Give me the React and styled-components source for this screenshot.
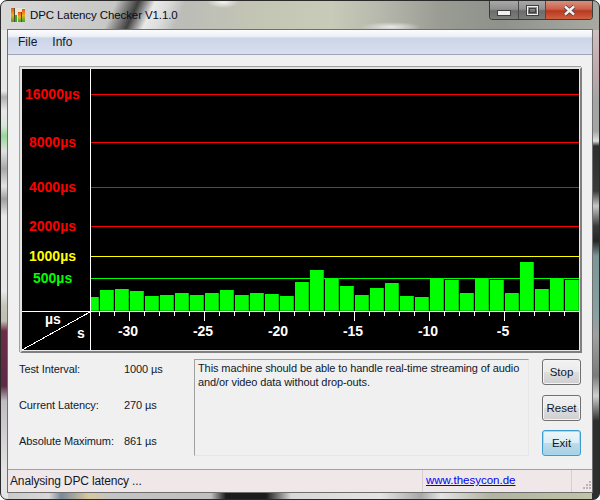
import React from "react";
import styled, { createGlobalStyle } from "styled-components";

const Global = createGlobalStyle`
  html, body { margin: 0; padding: 0; background: #fff; }
  * { box-sizing: border-box; }
`;

const uiFont = `"Liberation Sans", Arial, sans-serif`;

const Frame = styled.div`
  width: 600px;
  height: 500px;
  padding: 0 6px 6px 6px;
  border: 1px solid #2a2a2a;
  border-radius: 7px;
  display: flex;
  flex-direction: column;
  overflow: hidden;
  font-family: ${uiFont};
  color: #000;
  background-color: #c4c4c0;
  background-repeat: no-repeat;
  background-image:
    radial-gradient(ellipse 16px 6px at 222px 1px, #f4f4ec 0%, rgba(244,244,236,0) 100%),
    radial-gradient(ellipse 30px 5px at 390px 26px, #eaeaea 0%, rgba(234,234,234,0) 100%),
    linear-gradient(115deg, rgba(60,60,60,0) 0px, rgba(60,60,60,0) 105px, rgba(40,40,40,.85) 125px, rgba(235,235,235,.95) 140px, rgba(235,235,235,.7) 152px, rgba(60,60,60,0) 168px),
    linear-gradient(90deg, #d8d8d8 0px, #cfcfcf 60px, #bcbcb8 180px, #c4c6b4 260px, #c8cbb8 330px, #b6b8ac 380px, #9a9c94 440px, #8e928a 500px, #a8aaa2 598px),
    linear-gradient(180deg, #e8e8e8 0px, #e8e8e8 90px, #b0b0b0 96px, #e8e8e8 110px, #d8e4d8 125px, #96d896 135px, #e0e0e0 150px, #a8a8a8 168px, #e4e4e4 185px, #a0a0a0 198px, #e8e8e8 215px, #e8e8e8 290px, #c4c4b8 305px, #c0c0b0 320px, #6c2c48 330px, #5e2a44 385px, #c0bcc0 400px, #e4e4e4 470px),
    linear-gradient(180deg, #d8d0d0 0px, #c0a8ac 70px, #a4a4a4 100px, #a4a4a4 130px, #e0e0e0 140px, #2e2e2e 145px, #3a3a3a 190px, #c8c8c8 205px, #3a3a3a 225px, #262626 240px, #7c9698 255px, #86a0a2 310px, #a0a0a0 335px, #7a7a7a 375px, #d0d0d0 395px, #2e2e2e 420px, #2e2e2e 470px),
    linear-gradient(90deg, #c8c8c8 0px, #d8d8d8 48px, #7a8a98 60px, #d8c8a0 88px, #c4c4c4 110px, #c0c0c0 210px, #1c1c1c 225px, #1c1c1c 265px, #d8d8d8 290px, #e4e4e4 380px, #a8a8a8 420px, #e4e4e4 440px, #b0b4a0 490px, #c0c4a8 590px);
  background-size:
    100% 29px, 100% 29px, 100% 29px, 100% 29px,
    7px 100%, 7px 100%, 100% 7px;
  background-position:
    0 0, 0 0, 0 0, 0 0,
    left 0 top 0, right 0 top 0, left 0 bottom 0;
`;

const TitleBar = styled.header`
  flex: 0 0 28px;
  display: flex;
  align-items: flex-start;
  margin: 0 -6px;
  padding: 6px 0 0 9px;
`;

const AppIcon = styled.svg`
  width: 16px;
  height: 16px;
  flex: none;
`;

const Title = styled.h1`
  margin: 0 0 0 4px;
  font-size: 11.5px;
  letter-spacing: -0.1px;
  font-weight: 400;
  line-height: 16px;
  color: #0a0a18;
  flex: 1;
`;

const CaptionGroup = styled.div`
  display: flex;
  margin: -6px 6px 0 0;
  height: 19px;
  border: 1px solid #3c3c3c;
  border-top: 0;
  border-radius: 0 0 4px 4px;
  overflow: hidden;
`;

const CaptionButton = styled.div`
  width: ${(p) => p.$w}px;
  height: 100%;
  display: flex;
  align-items: center;
  justify-content: center;
  background: ${(p) =>
    p.$close
      ? "linear-gradient(180deg, #d89080 0%, #cc6048 45%, #b83820 55%, #d06040 100%)"
      : "linear-gradient(180deg, #a8a8a8 0%, #909090 45%, #6c6c6c 55%, #7c7c7c 100%)"};
  border-left: ${(p) => (p.$first ? "0" : "1px solid #4a4a4a")};
`;

const CaptionGlyph = styled.svg`
  display: block;
  margin-top: ${(p) => p.$drop || 0}px;
`;

const Client = styled.main`
  flex: 1;
  min-height: 0;
  display: flex;
  flex-direction: column;
  background: #f0f0f0;
  border: 1px solid #6f6f6f;
`;

const MenuBar = styled.nav`
  flex: 0 0 25px;
  display: flex;
  align-items: center;
  gap: 15px;
  padding: 0 0 1px 10px;
  font-size: 12px;
  color: #10182c;
  background: linear-gradient(180deg, #fbfcfe 0%, #eef1f8 25%, #ccd5e8 35%, #d8dfee 100%);
  border-bottom: 1px solid #a0a6b8;
`;

const MenuItem = styled.span`
  line-height: 16px;
`;

const GraphPanel = styled.section`
  margin: 12px 10px 0 12px;
  flex: 0 0 286px;
  border: 2px solid;
  border-color: #e2e2e2 #808080 #808080 #e2e2e2;
  box-shadow: -1px -1px 0 #a0a0a0;
`;

const GraphInner = styled.div`
  height: 282px;
  border-right: 1px solid #e8e8e8;
  border-bottom: 1px solid #e8e8e8;
  background: #000;
`;

const ChartSvg = styled.svg`
  display: block;
  width: 557px;
  height: 281px;
  font-family: "Liberation Sans", Arial, sans-serif;
  font-weight: 700;
  font-size: 14px;
`;

const InfoRow = styled.section`
  flex: 1;
  min-height: 0;
  display: flex;
  align-items: flex-start;
  padding: 6px 10px 0 10px;
`;

const StatList = styled.dl`
  flex: 0 0 176px;
  margin: 0;
  padding: 3px 0 0 1px;
  display: grid;
  grid-template-columns: 105px 1fr;
  grid-auto-rows: 36px;
  align-items: start;
  font-size: 11px;
  letter-spacing: -0.1px;
  line-height: 15px;
  color: #10182c;
`;

const StatLabel = styled.dt`
  margin: 0;
`;

const StatValue = styled.dd`
  margin: 0;
`;

const MessageBox = styled.div`
  flex: 0 0 335px;
  height: 97px;
  padding: 1px 3px 0;
  font-size: 11px;
  letter-spacing: -0.1px;
  line-height: 14px;
  color: #10182c;
  border: 1px solid;
  border-color: #a0a0a0 #e6e6e6 #e6e6e6 #a0a0a0;
`;

const ButtonColumn = styled.div`
  margin-left: 13px;
  display: flex;
  flex-direction: column;
  gap: 9.5px;
`;

const Button = styled.button`
  width: 39px;
  height: 26px;
  padding: 0;
  font-family: ${uiFont};
  font-size: 11.5px;
  color: #10182c;
  border-radius: 3px;
  border: 1px solid ${(p) => (p.$focus ? "#3c9ccf" : "#707070")};
  box-shadow: inset 0 0 0 1px ${(p) => (p.$focus ? "#9edcf2" : "#f4f4f4")};
  background: ${(p) =>
    p.$focus
      ? "linear-gradient(180deg, #ecf6fb 0%, #dceef6 48%, #bcdcea 52%, #a8cfe2 100%)"
      : "linear-gradient(180deg, #f2f2f2 0%, #ebebeb 48%, #dddddd 52%, #cfcfcf 100%)"};
`;

const StatusBar = styled.footer`
  flex: 0 0 23px;
  display: flex;
  align-items: center;
  font-size: 12px;
  color: #10182c;
  background: #f0e8e8;
  border-top: 1px solid #a0a0a0;
`;

const StatusText = styled.span`
  flex: 0 0 414px;
  padding-left: 2px;
  letter-spacing: -0.15px;
`;

const StatusLink = styled.a`
  flex: 0 0 150px;
  padding-left: 3px;
  height: 100%;
  font-size: 11.5px;
  line-height: 21px;
  color: #0000ee;
  text-decoration: underline;
  border-left: 1px solid #d4d0d0;
  border-right: 1px solid #d4d0d0;
`;

const Grip = styled.svg`
  margin-left: auto;
  align-self: flex-end;
`;

const bars = [
  297, 290, 289, 291, 296, 295, 293, 295, 293, 290, 295, 293, 294, 296, 282, 270,
  278, 286, 295, 288, 283, 296, 297, 278, 280, 293, 278, 280, 293, 262, 289, 278, 280,
];

const levels = [
  { y: 94, line: "#ff0000", label: "16000µs", x: 25 },
  { y: 142, line: "#ff0000", label: "8000µs", x: 29 },
  { y: 187, line: "#ff0000", label: "4000µs", x: 29 },
  { y: 226, line: "#ff0000", label: "2000µs", x: 29 },
  { y: 256, line: "#ffff00", label: "1000µs", x: 29 },
  { y: 278, line: "#00ff00", label: "500µs", x: 33 },
];

const axisLabels = [
  { v: "-30", x: 129 },
  { v: "-25", x: 204 },
  { v: "-20", x: 279 },
  { v: "-15", x: 354 },
  { v: "-10", x: 429 },
  { v: "-5", x: 504 },
];

function Chart() {
  const ticks = [];
  for (let i = 0; i < 32; i++) ticks.push(99 + 15 * i);
  return (
    <ChartSvg viewBox="22 69 557 281" shapeRendering="crispEdges">
      {levels.map((l) => (
        <rect key={l.y} x="91" y={l.y} width="489" height="1" fill={l.line} />
      ))}
      {bars.map((top, i) => {
        const x = i === 0 ? 91 : 100 + 15 * (i - 1);
        const w = i === 0 ? 8 : 14;
        return (
          <g key={i}>
            <rect x={x} y={top} width={w} height={311 - top} fill="#00c800" />
            <rect x={x} y={top} width={w - 1} height={310 - top} fill="#00ff00" />
          </g>
        );
      })}
      <rect x="22" y="311" width="558" height="1" fill="#fff" />
      <rect x="90" y="69" width="1" height="282" fill="#fff" />
      {ticks.map((x) => {
        const long = (x - 129) % 75 === 0;
        return <rect key={x} x={x} y="312" width="1" height={long ? 9 : 4} fill="#fff" />;
      })}
      <line x1="22" y1="350" x2="90" y2="312" stroke="#fff" strokeWidth="1" />
      {levels.map((l) => (
        <text key={l.label} x={l.x} y={l.y + 5} fill={l.line}>
          {l.label}
        </text>
      ))}
      <text x="45" y="324" fill="#fff">µs</text>
      <text x="77" y="338" fill="#fff">s</text>
      {axisLabels.map((a) => (
        <text key={a.v} x={a.x - 1} y="336" fill="#fff" textAnchor="middle">
          {a.v}
        </text>
      ))}
    </ChartSvg>
  );
}

export default function App() {
  return (
    <>
      <Global />
      <Frame>
        <TitleBar>
          <AppIcon viewBox="0 0 16 16">
            <defs>
              <linearGradient id="barFill" x1="0" y1="0" x2="0" y2="1">
                <stop offset="0" stopColor="#e8501c" />
                <stop offset="0.5" stopColor="#e8b020" />
                <stop offset="1" stopColor="#38a838" />
              </linearGradient>
            </defs>
            <rect x="0.5" y="1" width="14.5" height="14" fill="#e8e4d8" />
            <rect x="1" y="1" width="3" height="14" fill="url(#barFill)" />
            <rect x="5" y="8" width="2" height="7" fill="#38a838" />
            <rect x="8" y="5" width="3" height="10" fill="url(#barFill)" />
            <rect x="12" y="2" width="3" height="13" fill="url(#barFill)" />
            <rect x="4" y="1" width="1" height="14" fill="#5c4a30" />
            <rect x="11" y="5" width="1" height="10" fill="#5c4a30" />
          </AppIcon>
          <Title>DPC Latency Checker V1.1.0</Title>
          <CaptionGroup>
            <CaptionButton $w={28} $first>
              <CaptionGlyph $drop={7} width="14" height="7" viewBox="0 0 14 7">
                <rect x="0.5" y="0.5" width="13" height="5" fill="#f0f0f0" stroke="#404040" />
              </CaptionGlyph>
            </CaptionButton>
            <CaptionButton $w={27}>
              <CaptionGlyph width="13" height="11" viewBox="0 0 13 11">
                <rect x="0.5" y="0.5" width="12" height="10" fill="none" stroke="#404040" />
                <rect x="1.5" y="1.5" width="10" height="8" fill="none" stroke="#f0f0f0" />
                <rect x="3.5" y="3.5" width="6" height="4" fill="none" stroke="#404040" />
              </CaptionGlyph>
            </CaptionButton>
            <CaptionButton $w={47} $close>
              <CaptionGlyph width="13" height="11" viewBox="0 0 13 11">
                <path d="M2 1.5 L11 9.5 M11 1.5 L2 9.5" stroke="#404040" strokeWidth="4" />
                <path d="M2 1.5 L11 9.5 M11 1.5 L2 9.5" stroke="#f4f4f4" strokeWidth="2.4" />
              </CaptionGlyph>
            </CaptionButton>
          </CaptionGroup>
        </TitleBar>
        <Client>
          <MenuBar>
            <MenuItem>File</MenuItem>
            <MenuItem>Info</MenuItem>
          </MenuBar>
          <GraphPanel>
            <GraphInner>
              <Chart />
            </GraphInner>
          </GraphPanel>
          <InfoRow>
            <StatList>
              <StatLabel>Test Interval:</StatLabel>
              <StatValue>1000 µs</StatValue>
              <StatLabel>Current Latency:</StatLabel>
              <StatValue>270 µs</StatValue>
              <StatLabel>Absolute Maximum:</StatLabel>
              <StatValue>861 µs</StatValue>
            </StatList>
            <MessageBox>
              This machine should be able to handle real-time streaming of audio and/or video data without drop-outs.
            </MessageBox>
            <ButtonColumn>
              <Button>Stop</Button>
              <Button>Reset</Button>
              <Button $focus>Exit</Button>
            </ButtonColumn>
          </InfoRow>
          <StatusBar>
            <StatusText>Analysing DPC latency ...</StatusText>
            <StatusLink href="#">www.thesycon.de</StatusLink>
            <Grip width="12" height="12" viewBox="0 0 12 12">
              {[[9, 1], [6, 4], [9, 4], [3, 7], [6, 7], [9, 7]].map(([x, y]) => (
                <rect key={`${x}-${y}`} x={x} y={y} width="2" height="2" fill="#b8b4b4" />
              ))}
            </Grip>
          </StatusBar>
        </Client>
      </Frame>
    </>
  );
}
